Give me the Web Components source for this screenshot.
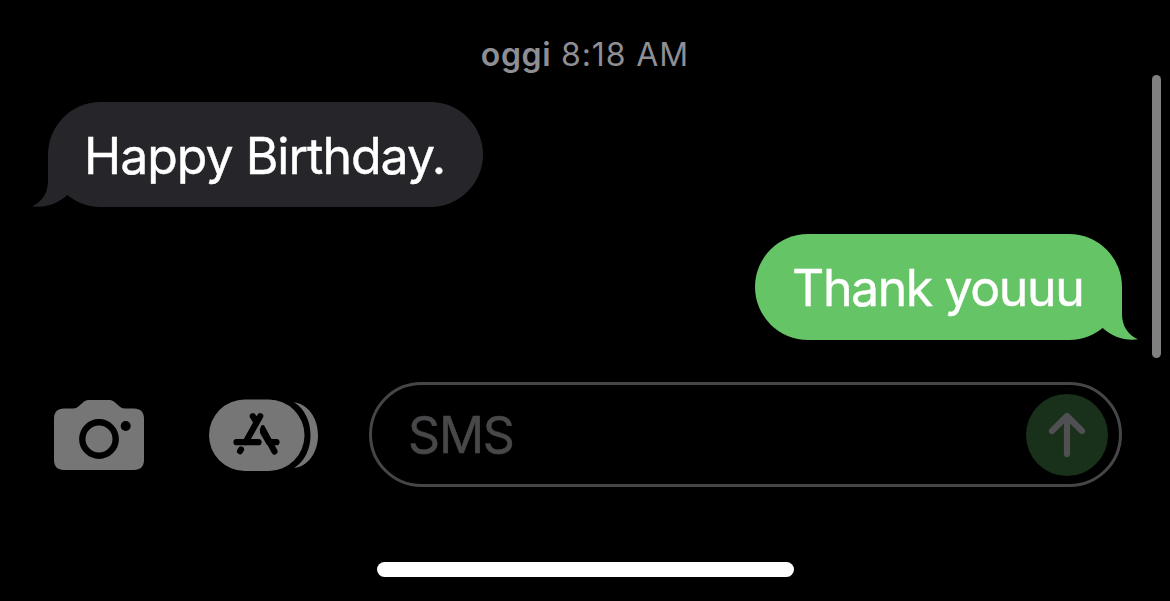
<!DOCTYPE html>
<html lang="it">
<head>
<meta charset="utf-8">
<title>Messaggi</title>
<style>
html, body { margin: 0; background: #000; }
body { width: 1170px; height: 601px; overflow: hidden; font-family: Inter, "Liberation Sans", sans-serif; }
</style>
</head>
<body>
<chat-screen>
  <chat-thread slot="thread">
    <time-stamp time="8:18 AM">oggi</time-stamp>
    <chat-bubble kind="received" style="--track:-1px">Happy Birthday.</chat-bubble>
    <chat-bubble kind="sent" style="--track:-1.4px">Thank youuu</chat-bubble>
  </chat-thread>
  <chat-composer slot="composer">SMS</chat-composer>
</chat-screen>
<script>
function define(name, html) {
  const template = document.createElement('template');
  template.innerHTML = html;
  customElements.define(name, class extends HTMLElement {
    constructor() {
      super();
      this.attachShadow({ mode: 'open' }).append(template.content.cloneNode(true));
    }
    connectedCallback() {
      const t = this.shadowRoot.querySelector('[data-time]');
      if (t) t.textContent = this.getAttribute('time');
    }
  });
}

define('chat-screen', `
<style>
:host { display: flex; flex-direction: column; position: relative; box-sizing: border-box; width: 1170px; height: 601px; background: #000; }
.home { width: 417px; height: 15px; border-radius: 8px; background: #fff; margin: 75px 0 0 377px; }
.scroll { position: absolute; left: 1152px; top: 75px; width: 9px; height: 283px; border-radius: 5px; background: #808080; }
</style>
<slot name="thread"></slot>
<slot name="composer"></slot>
<div class="home"></div>
<div class="scroll"></div>`);

define('chat-thread', `
<style>
:host { display: flex; flex-direction: column; box-sizing: border-box; height: 381px; padding: 35px 48px 0; gap: 27px; }
</style>
<slot></slot>`);

define('time-stamp', `
<style>
:host { display: flex; justify-content: center; height: 40px; line-height: 40px; font-size: 32px; color: #8e8e93; white-space: pre; }
b { font-weight: 600; letter-spacing: .6px; }
span { letter-spacing: .9px; }
</style>
<b><slot></slot></b><span> </span><span data-time></span>`);

define('chat-bubble', `
<style>
:host { display: block; position: relative; box-sizing: border-box; height: 105px; border-radius: 53px; font-size: 50px; line-height: 108px; letter-spacing: var(--track, 0); color: #fff; white-space: nowrap; -webkit-text-stroke: .4px #fff; }
:host([kind="received"]) { align-self: flex-start; width: 435px; padding-left: 36px; background: #26262a; fill: #26262a; }
:host([kind="sent"]) { align-self: flex-end; width: 367px; height: 105.5px; padding-left: 37px; background: #65c466; fill: #65c466; }
svg { position: absolute; left: -16px; bottom: 0; width: 60px; height: 60px; }
:host([kind="sent"]) svg { left: auto; right: -16px; transform: scaleX(-1); }
span { position: relative; }
</style>
<svg viewBox="0 0 60 60"><path d="M16 7V34C16 46 10 55 0 59.3C12 61.3 26 57 35 48.3L50 35L30 5Z"/></svg>
<span><slot></slot></span>`);

define('camera-icon', `
<style>:host { display: block; width: 90px; height: 71px; } svg { display: block; }</style>
<svg width="90" height="71" viewBox="0 0 90 71">
<path fill="#767676" d="M10 8.500H19C22 8.500 23.500 7.500 25.500 5.500L29 2.500C31 .5 33 0 35.500 0H54C57 0 59 .5 61 2.500L64.500 5.500C66.500 7.500 68 8.500 71 8.500H80C86.500 8.500 90 12 90 18.500V60C90 66.500 86.500 70 80 70H10C3.500 70 0 66.500 0 60V18.500C0 12 3.500 8.500 10 8.500Z"/>
<circle cx="45" cy="39" r="16.700" fill="none" stroke="#000" stroke-width="6.400"/>
<circle cx="71.700" cy="26" r="5"/>
</svg>`);

define('apps-icon', `
<style>:host { display: block; width: 110px; height: 73px; } svg { display: block; }</style>
<svg width="110" height="73" viewBox="0 0 110 73">
<rect y="0.500" width="95.500" height="71.500" rx="35.700" fill="#767676"/>
<path fill="#767676" d="M85 3.200C99 5 109 19 109 36.200S99 67.500 85 69C96 62 101.500 50 101.500 36.200S96 10 85 3.200Z"/>
<g fill="none" stroke="#000" stroke-width="6.200" stroke-linecap="round">
<path d="M43.800 17.200L46.500 21.500M51.200 17.200L36.500 43.200M32 50.500L31 52.200M27.500 43.200H49.500M60.500 43.200H67.500M54 31L65.500 52.500"/>
</g>
<path d="M52 26.500L55 26L61 38L66 46H58L51 34Z"/>
</svg>`);

define('send-button', `
<style>
:host { display: grid; place-items: center; width: 82px; height: 82px; border-radius: 50%; background: #19311a; }
</style>
<svg width="82" height="82" viewBox="0 0 82 82" fill="none" stroke="#504f52" stroke-width="6.200" stroke-linecap="round" stroke-linejoin="round"><path d="M41 22V60M26 37L41 22L56 37"/></svg>`);

define('chat-composer', `
<style>
:host { display: flex; align-items: center; box-sizing: border-box; height: 106px; padding: 0 48px 0 54px; }
camera-icon, apps-icon { margin-top: 2px; }
apps-icon { margin-left: 65px; }
.field { display: flex; align-items: center; justify-content: space-between; box-sizing: border-box; width: 753px; height: 105px; margin: 1px 0 0 50px; padding: 0 11px 0 36px; border: 3px solid #464648; border-radius: 53px; font-size: 50px; line-height: 60px; color: #48484a; letter-spacing: -1.2px; }
.field span { -webkit-text-stroke: .5px #48484a; }
</style>
<camera-icon></camera-icon>
<apps-icon></apps-icon>
<div class="field"><span><slot></slot></span><send-button></send-button></div>`);
</script>
</body>
</html>
